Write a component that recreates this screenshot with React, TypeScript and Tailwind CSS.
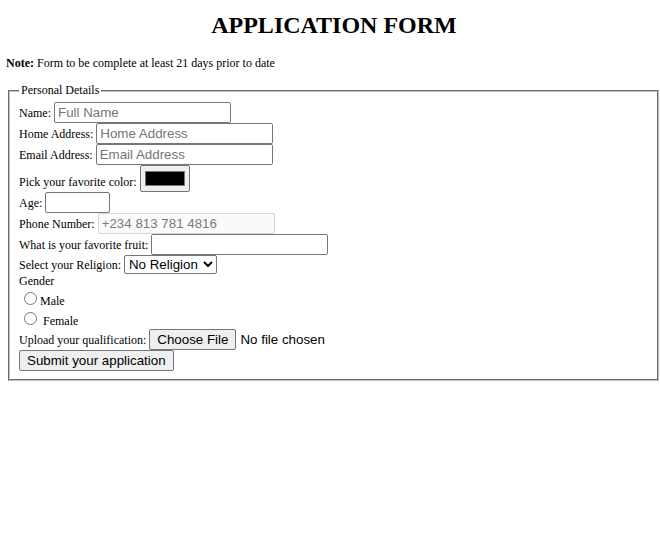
const sans = "font-['Liberation_Sans',Arial,sans-serif] text-[13.333px]";
const field = `h-[21px] w-[177px] border border-[#767676] rounded-[2px] px-[3px] py-[1px] bg-white align-baseline placeholder:text-[#757575] ${sans}`;
const btn = `h-[21px] px-[7px] py-[1px] border border-[#767676] rounded-[2px] bg-[#efefef] text-black ${sans}`;

export default function App() {
  return (
    <div className="min-h-screen bg-white text-black text-[12px] leading-[normal] font-['Liberation_Serif','Times_New_Roman',serif]">
      <h1 className="pl-[8px] pt-[11px] text-center text-[24px] font-bold leading-[28px]">
        APPLICATION FORM
      </h1>

      <p className="mt-[17px] pl-[6px]">
        <b>Note:</b> Form to be complete at least 21 days prior to date
      </p>

      <form className="mt-[12px] pl-[8px]">
        <fieldset className="w-[651px] border-2 [border-style:groove] border-[#c0c0c0] px-[9px] pt-[4px] pb-[7.5px]">
          <legend className="px-[2px]">Personal Details</legend>

          <div>
            Name:{" "}
            <input type="text" placeholder="Full Name" className={field} />
          </div>
          <div>
            Home Address:{" "}
            <input type="text" placeholder="Home Address" className={field} />
          </div>
          <div>
            Email Address:{" "}
            <input type="email" placeholder="Email Address" className={field} />
          </div>
          <div>
            Pick your favorite color:{" "}
            <input
              type="color"
              defaultValue="#000000"
              className="h-[27px] w-[50px] border border-[#767676] rounded-[2px] bg-[#efefef] px-[2px] py-[1px] align-baseline"
            />
          </div>
          <div>
            Age: <input type="text" className={`${field} !w-[65px]`} />
          </div>
          <div>
            Phone Number:{" "}
            <input
              type="tel"
              disabled
              placeholder="+234 813 781 4816"
              className={`h-[21px] w-[177px] border border-[#d6d6d6] rounded-[2px] px-[3px] py-[1px] bg-[#fafafa] align-baseline placeholder:text-[#7a7a7a] ${sans}`}
            />
          </div>
          <div>
            What is your favorite fruit:{" "}
            <input type="text" className={field} />
          </div>
          <div>
            Select your Religion:{" "}
            <select
              defaultValue="none"
              className={`h-[19px] w-[93px] border border-[#767676] rounded-[2px] bg-white text-black align-baseline ${sans}`}
            >
              <option value="none">No Religion</option>
              <option value="christianity">Christianity</option>
              <option value="islam">Islam</option>
              <option value="other">Other</option>
            </select>
          </div>

          <div>Gender</div>
          <div>
            <label>
              <input type="radio" name="gender" className="ml-[5px] mr-[3px] mt-[3px] align-baseline" />
              Male
            </label>
          </div>
          <div>
            <label>
              <input type="radio" name="gender" className="ml-[5px] mr-[3px] mt-[3px] align-baseline" />{" "}
              Female
            </label>
          </div>

          <div>
            Upload your qualification:{" "}
            <input
              type="file"
              className={`align-baseline ${sans} file:mr-[4px] file:h-[21px] file:px-[7px] file:py-[1px] file:border file:border-[#767676] file:rounded-[2px] file:bg-[#efefef] file:text-black`}
            />
          </div>
          <div>
            <button type="submit" className={btn}>
              Submit your application
            </button>
          </div>
        </fieldset>
      </form>
    </div>
  );
}
